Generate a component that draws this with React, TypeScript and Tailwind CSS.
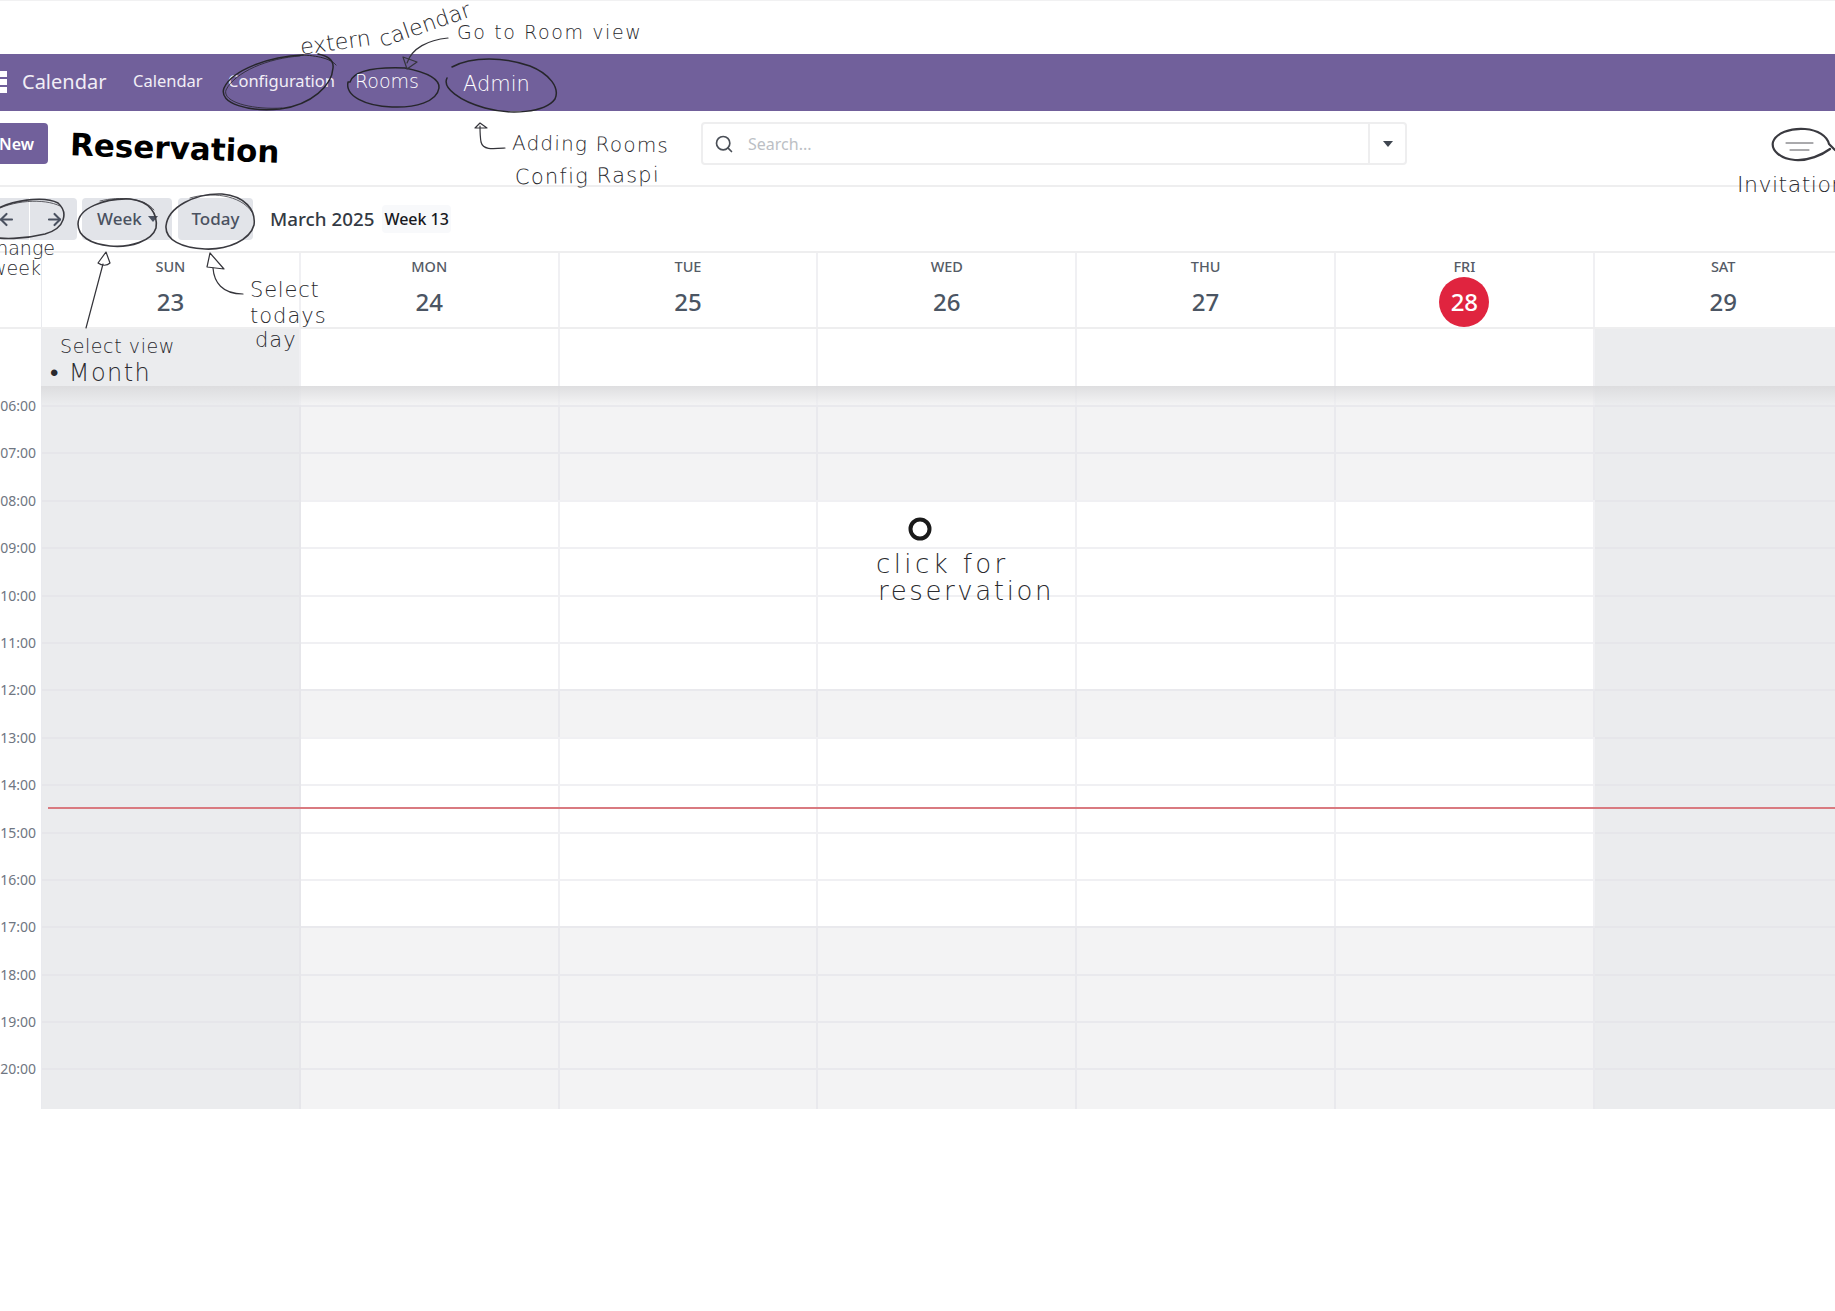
import React from 'react';
import { ArrowLeft, ArrowRight, Search } from 'lucide-react';

const days = [
  { name: 'SUN', num: 23 },
  { name: 'MON', num: 24 },
  { name: 'TUE', num: 25 },
  { name: 'WED', num: 26 },
  { name: 'THU', num: 27 },
  { name: 'FRI', num: 28, today: true },
  { name: 'SAT', num: 29 },
];

// grey = outside of office hours
const hours = [
  { label: '06:00', grey: true },
  { label: '07:00', grey: true },
  { label: '08:00', grey: false },
  { label: '09:00', grey: false },
  { label: '10:00', grey: false },
  { label: '11:00', grey: false },
  { label: '12:00', grey: true },
  { label: '13:00', grey: false },
  { label: '14:00', grey: false },
  { label: '15:00', grey: false },
  { label: '16:00', grey: false },
  { label: '17:00', grey: true },
  { label: '18:00', grey: true },
  { label: '19:00', grey: true },
  { label: '20:00', grey: true },
];

const gridCols = 'grid grid-cols-[42px_repeat(7,258.8px)]';

const Scribbles = () => (
  <svg className="absolute inset-0 pointer-events-none" width="1835" height="1311" fill="none" stroke="#26262b" strokeLinecap="round" strokeLinejoin="round">
    {/* circles round the menu */}
    <g strokeWidth="1.5">
      <path d="M303 55C270 56 232 70 224 88C218 104 250 112 280 109C312 105 332 85 333 68C334 60 328 56 318 54" />
      <path d="M300 56C268 58 235 72 226 90C222 102 252 110 282 108" strokeWidth="0.8" />
      <path d="M303 55C322 56 332 60 336 65" strokeWidth="1" />
      <path d="M350 82C354 70 378 67 405 68C425 72 440 78 439 88C437 102 415 108 392 107C365 106 345 96 348 82Z" />
      <path d="M452 67C472 56 505 57 530 66C550 74 560 88 555 99C545 113 510 115 485 108C460 101 442 88 447 78" />
    </g>
    <g strokeWidth="1.6" stroke="#3a3a40">
      <path d="M-10 213C10 199 45 196 58 203C68 212 66 228 45 234C25 239 0 240 -10 236" />
      <path d="M-8 212C12 200 44 198 60 206" strokeWidth="0.8" />
      <path d="M78 224C78 208 105 198 130 199C150 201 158 214 156 228C152 241 130 248 110 246C90 244 78 236 78 224Z" />
      <path d="M100 201C120 196 145 198 154 210" strokeWidth="0.8" />
      <path d="M166 226C168 207 195 193 222 194C245 196 256 210 254 225C250 240 228 250 205 249C182 248 165 240 166 226Z" />
      <path d="M190 198C210 192 240 194 252 212" strokeWidth="0.8" />
    </g>
    {/* arrows */}
    <g strokeWidth="1.2" stroke="#34343a">
      <path d="M448 38C428 40 412 48 407 63" />
      <path d="M403 57L417 62L407 69Z" />
      <path d="M505 148C492 149 483 150 481 142C480 136 480 132 480 126" />
      <path d="M475 128L480 123L487 128Z" />
      <path d="M86 328L103 264" />
      <path d="M106 252L98 263C102 266 107 266 110 263Z" />
      <path d="M213 268C214 282 222 294 243 294" />
      <path d="M210 253L207 267L224 269Z" />
    </g>
    {/* invitation bubble */}
    <path d="M1830 149C1822 155 1808 161 1795 160C1780 159 1771 150 1773 142C1776 133 1790 128 1805 129C1818 130 1827 136 1829 144L1835 150" strokeWidth="2.2" stroke="#3a3a40" />
    <path d="M1786 143H1813M1790 150H1809" strokeWidth="1" stroke="#55555a" />
    <circle cx="920" cy="529" r="9.5" strokeWidth="4" stroke="#1a1a1a" />
  </svg>
);

const note = 'absolute whitespace-nowrap font-["DejaVu_Sans",sans-serif] font-extralight text-[#2a2a2e] leading-none';

const Notes = () => (
  <>
    <span className={`${note} left-[300px] top-[32px] text-[22px] -rotate-[8deg]`}>extern</span>
    <span className={`${note} left-[377px] top-[14px] text-[22px] -rotate-[19deg]`}>calendar</span>
    <span className={`${note} left-[457px] top-[23px] text-[19px] tracking-[1.6px]`}>Go to Room view</span>
    <span className='absolute left-[355px] top-[72px] text-[19px] leading-none text-white whitespace-nowrap font-["DejaVu_Sans",sans-serif] font-extralight'>Rooms</span>
    <span className='absolute left-[463px] top-[74px] text-[21px] leading-none text-white whitespace-nowrap font-["DejaVu_Sans",sans-serif] font-extralight'>Admin</span>
    <span className={`${note} left-[512px] top-[134px] text-[20px] tracking-[1.2px] rotate-[1deg]`}>Adding Rooms</span>
    <span className={`${note} left-[515px] top-[166px] text-[21px] tracking-[1.2px] -rotate-[1deg]`}>Config Raspi</span>
    <span className='absolute left-[70px] top-[129px] rotate-[2deg] whitespace-nowrap font-["DejaVu_Sans",sans-serif] font-bold text-[31px] leading-[38px] text-black'>Reservation</span>
    <span className={`${note} right-[1780px] top-[239px] text-[19px]`}>Change</span>
    <span className={`${note} right-[1794px] top-[259px] text-[19px]`}>week</span>
    <span className={`${note} left-[250px] top-[280px] text-[21px] tracking-[0.8px]`}>Select</span>
    <span className={`${note} left-[250px] top-[306px] text-[21px] tracking-[1px]`}>todays</span>
    <span className={`${note} left-[255px] top-[330px] text-[21px] tracking-[1px]`}>day</span>
    <span className={`${note} left-[60px] top-[337px] text-[19px] tracking-[0.6px]`}>Select view</span>
    <span className={`${note} left-[50px] top-[361px] text-[24px] tracking-[1.4px]`}>• Month</span>
    <span className={`${note} left-[876px] top-[551px] text-[26px] tracking-[3.4px]`}>click for</span>
    <span className={`${note} left-[878px] top-[578px] text-[26px] tracking-[2.6px]`}>reservation</span>
    <span className={`${note} left-[1737px] top-[174px] text-[22px] tracking-[0.5px]`}>Invitation</span>
  </>
);

export default function App() {
  return (
    <div className='relative w-[1835px] h-[1311px] overflow-hidden bg-white font-["Noto_Sans",sans-serif]'>
      <div className="h-[54px] border-t border-[#f1f1f2]" />

      {/* navbar */}
      <nav className="flex items-center h-[57px] pb-[2px] bg-[#71609b] text-white">
        <div className="grid grid-cols-1 gap-[2px] w-[7px] mr-[15px]">
          <div className="h-[6px] bg-white" />
          <div className="h-[6px] bg-white" />
          <div className="h-[6px] bg-white" />
        </div>
        <span className="text-[20px] text-[#f1eef6] w-[111px]">Calendar</span>
        <span className="text-[16.5px] text-[#f1eef6] w-[95px]">Calendar</span>
        <span className="text-[16.5px] text-[#f1eef6]">Configuration</span>
      </nav>

      {/* control panel */}
      <div className="flex items-start h-[76px] pt-[11px] border-b-2 border-[#eeeeef]">
        <button className="flex items-center justify-end -ml-[14px] mt-px w-[62px] h-[41px] pr-[14px] rounded-[4px] bg-[#71609b] text-white text-[16px] font-semibold">New</button>
        <div className="flex items-center ml-[653px] w-[706px] h-[43px] rounded-[4px] border-2 border-[#eeeeef]">
          <Search className="ml-[11px] text-[#4a4f57]" size={20} strokeWidth={2} />
          <span className="ml-[14px] flex-1 text-[16px] text-[#bcbfc5]">Search...</span>
          <div className="flex items-center justify-center w-[37px] h-full border-l-2 border-[#eeeeef]">
            <div className="w-0 h-0 border-x-[5.5px] border-x-transparent border-t-[6px] border-t-[#3f4650]" />
          </div>
        </div>
      </div>

      {/* toolbar */}
      <div className="flex items-center h-[64px] text-[#4a5160]">
        <div className="flex -ml-[20px] h-[42px] rounded-[4px] overflow-hidden">
          <button className="flex items-center justify-end w-[49px] pr-[13px] bg-[#e2e4e9]"><ArrowLeft size={19} strokeWidth={2.6} /></button>
          <button className="flex items-center justify-center w-[47px] ml-px pl-[2px] bg-[#e2e4e9]"><ArrowRight size={19} strokeWidth={2.6} /></button>
        </div>
        <button className="flex items-center ml-[5px] w-[90px] h-[42px] pl-[15px] rounded-[4px] bg-[#e2e4e9] text-[17px] font-medium">
          Week
          <span className="ml-[6px] w-0 h-0 border-x-[5.5px] border-x-transparent border-t-[6px] border-t-[#4a5160]" />
        </button>
        <button className="ml-[6px] w-[75px] h-[42px] rounded-[4px] bg-[#e2e4e9] text-[17px] font-medium">Today</button>
        <span className="ml-[17px] text-[18.8px] font-medium text-[#343a44]">March 2025</span>
        <span className="ml-[8px] px-[2px] py-[2px] rounded-[4px] bg-[#f8f9fb] text-[16px] font-medium text-[#16181d]">Week 13</span>
      </div>

      {/* day header */}
      <div className={`${gridCols} h-[78px] border-y-2 border-[#eeeeef]`}>
        <div className="border-r border-[#e9eaee]" />
        {days.map(d => (
          <div key={d.name} className="flex flex-col items-center border-r-2 border-[#f0f0f3] text-[#4b5563]">
            <span className="mt-[3px] text-[14.5px] leading-[20px] font-medium text-[#555b66]">{d.name}</span>
            {d.today ? (
              <span className="flex items-center justify-center w-[50px] h-[50px] mt-px rounded-full bg-[#e0243f] text-white text-[24px] font-medium">{d.num}</span>
            ) : (
              <span className="flex items-center justify-center h-[50px] mt-px text-[24px] font-medium">{d.num}</span>
            )}
          </div>
        ))}
      </div>

      {/* all day row */}
      <div className={`${gridCols} h-[57px]`}>
        <div className="border-r border-[#e9eaee]" />
        {days.map(d => (
          <div key={d.name} className={`border-r-2 border-[#f0f0f3] ${d.name === 'SUN' || d.name === 'SAT' ? 'bg-[#ebecee]' : 'bg-white'}`} />
        ))}
      </div>

      {/* time grid */}
      <div className="relative">
        <div className={`${gridCols} h-[19px]`}>
          <div className="border-r border-[#e9eaee]" />
          {days.map(d => (
            <div key={d.name} className={`border-r-2 border-[#eeeef1] ${d.name === 'SUN' || d.name === 'SAT' ? 'bg-[#ebecee]' : 'bg-[#f3f3f4]'}`} />
          ))}
        </div>
        {hours.map((h, i) => (
          <div key={h.label} className={`${gridCols} ${i === hours.length - 1 ? 'h-[41px]' : 'h-[47.4px]'}`}>
            <div className="relative border-r border-[#e9eaee]">
              <span className="absolute -top-[9px] right-[5px] text-[14px] leading-[20px] text-[#6f7682]">{h.label}</span>
            </div>
            {days.map(d => (
              <div
                key={d.name}
                className={`border-t-2 border-r-2 ${d.name === 'SUN' || d.name === 'SAT' ? 'bg-[#ebecee] border-[#e6e6ea]' : h.grey ? 'bg-[#f3f3f4] border-[#e9e9ed]' : 'bg-white border-[#f0f0f3]'}`}
              />
            ))}
          </div>
        ))}
        {/* shadow under the all day row */}
        <div className="absolute left-[41px] right-0 top-0 h-[18px] bg-gradient-to-b from-[#d9d9db]/80 to-transparent" />
        {/* now line */}
        <div className="absolute left-[48px] right-0 top-[421px] h-[2px] bg-[#d97a80]" />
      </div>

      <Scribbles />
      <Notes />
    </div>
  );
}
